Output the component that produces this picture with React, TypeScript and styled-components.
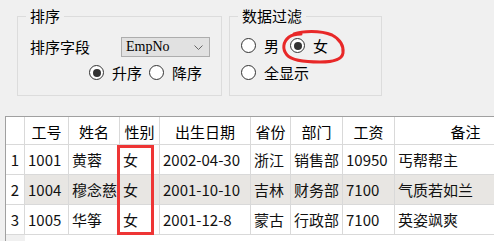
import React from "react";
import styled, { createGlobalStyle } from "styled-components";

const GlobalStyle = createGlobalStyle`
  html, body {
    margin: 0;
    padding: 0;
    overflow: hidden;
    background: #f0f0f0;
  }
  body {
    font-family: "Noto Sans CJK SC", "Noto Sans", sans-serif;
    font-size: 15px;
    line-height: 20px;
    color: #000;
  }
`;

const Page = styled.div`
  width: 100vw;
  height: 100vh;
  display: flex;
  flex-direction: column;
`;

const TopArea = styled.div`
  position: relative;
  display: flex;
  gap: 7px;
  height: 116px;
  box-sizing: border-box;
  padding: 6px 0 0 17px;
  flex-shrink: 0;
`;

const GroupBox = styled.fieldset<{ $w: number }>`
  width: ${(p) => p.$w}px;
  height: 90px;
  box-sizing: border-box;
  margin: 0;
  padding: 0 0 0 8px;
  border: 1px solid #dcdcdc;
  min-width: 0;
`;

const Legend = styled.legend`
  padding: 0 4px;
  font-size: 15px;
  line-height: 20px;
`;

const GroupBody = styled.div<{ $pt: number; $pl: number; $gap: number }>`
  display: flex;
  flex-direction: column;
  gap: ${(p) => p.$gap}px;
  padding: ${(p) => p.$pt}px 0 0 ${(p) => p.$pl}px;
`;

const FieldRow = styled.div`
  display: flex;
  align-items: center;
  height: 20px;
`;

const FieldLabel = styled.span`
  width: 91px;
  flex-shrink: 0;
`;

const Combo = styled.div`
  width: 89px;
  height: 20px;
  box-sizing: border-box;
  background: #e1e1e1;
  border: 1px solid #adadad;
  display: flex;
  align-items: center;
  justify-content: space-between;
  padding: 0 6px 0 4px;
  font-family: "Liberation Serif", "DejaVu Serif", serif;
  font-size: 14px;
`;

const RadioRow = styled.div<{ $indent: number; $gap: number }>`
  display: flex;
  align-items: center;
  height: 21px;
  padding-left: ${(p) => p.$indent}px;
  gap: ${(p) => p.$gap}px;
`;

const RadioItem = styled.label`
  display: flex;
  align-items: center;
  gap: 8px;
  white-space: nowrap;
`;

const RadioCircle = styled.span<{ $checked?: boolean }>`
  position: relative;
  width: 15px;
  height: 15px;
  box-sizing: border-box;
  border-radius: 50%;
  border: 1px solid #333;
  background: #fff;
  flex-shrink: 0;
  &::after {
    content: "";
    display: ${(p) => (p.$checked ? "block" : "none")};
    position: absolute;
    left: 2.5px;
    top: 2.5px;
    width: 8px;
    height: 8px;
    border-radius: 50%;
    background: #333;
  }
`;

const Scribble = styled.svg`
  position: absolute;
  left: 280px;
  top: 28px;
  width: 66px;
  height: 38px;
  overflow: visible;
`;

const TableWrap = styled.div`
  position: relative;
  flex: 1;
  margin-left: 5px;
  border-left: 1px solid #a0a0a0;
  border-top: 1px solid #a0a0a0;
  overflow: hidden;
  background: linear-gradient(to right, #f0f0f0 19px, #fff 19px);
`;

const Grid = styled.div`
  display: grid;
  grid-template-columns: 19px 44px 51px 40px 91px 40px 52px 52px 142px;
  grid-template-rows: 28px repeat(3, 30px);
  width: max-content;
`;

const Cell = styled.div<{ $center?: boolean; $alt?: boolean; $head?: boolean }>`
  box-sizing: border-box;
  border-right: 1px solid #d9d9d9;
  border-bottom: 1px solid #d9d9d9;
  background: ${(p) => (p.$alt ? "#e8e6e3" : "#fff")};
  display: flex;
  align-items: center;
  justify-content: ${(p) => (p.$center ? "center" : "flex-start")};
  padding: ${(p) => (p.$head ? "2px 0 0" : "1px 3px 0")};
  white-space: nowrap;
  overflow: hidden;
  color: ${(p) => (p.$head ? "#000" : "#111")};
`;

const Highlight = styled.div`
  position: absolute;
  left: 111px;
  top: 28px;
  width: 37px;
  height: 90px;
  box-sizing: border-box;
  border: 3px solid #ee3535;
  pointer-events: none;
`;

const headers = ["工号", "姓名", "性别", "出生日期", "省份", "部门", "工资", "备注"];
const rows = [
  ["1001", "黄蓉", "女", "2002-04-30", "浙江", "销售部", "10950", "丐帮帮主"],
  ["1004", "穆念慈", "女", "2001-10-10", "吉林", "财务部", "7100", "气质若如兰"],
  ["1005", "华筝", "女", "2001-12-8", "蒙古", "行政部", "7100", "英姿飒爽"],
];

function Radio({ label, checked }: { label: string; checked?: boolean }) {
  return (
    <RadioItem>
      <RadioCircle $checked={checked} />
      <span>{label}</span>
    </RadioItem>
  );
}

export default function App() {
  return (
    <>
      <GlobalStyle />
      <Page>
        <TopArea>
          <GroupBox $w={205}>
            <Legend>排序</Legend>
            <GroupBody $pt={11} $pl={4} $gap={5}>
              <FieldRow>
                <FieldLabel>排序字段</FieldLabel>
                <Combo>
                  <span>EmpNo</span>
                  <svg width="9" height="5" viewBox="0 0 9 5">
                    <polyline points="0.5,0.5 4.5,4.5 8.5,0.5" fill="none" stroke="#666" strokeWidth="1" />
                  </svg>
                </Combo>
              </FieldRow>
              <RadioRow $indent={59} $gap={7}>
                <Radio label="升序" checked />
                <Radio label="降序" />
              </RadioRow>
            </GroupBody>
          </GroupBox>
          <GroupBox $w={153}>
            <Legend>数据过滤</Legend>
            <GroupBody $pt={9} $pl={3} $gap={6}>
              <RadioRow $indent={0} $gap={11}>
                <Radio label="男" />
                <Radio label="女" checked />
              </RadioRow>
              <RadioRow $indent={0} $gap={11}>
                <Radio label="全显示" />
              </RadioRow>
            </GroupBody>
          </GroupBox>
          <Scribble viewBox="0 0 66 38">
            <path
              d="M 14 6 C 22 3, 40 2, 52 7 C 60 11, 64 18, 63 25 C 62 32, 52 34, 40 34 C 26 34, 12 33, 7 27 C 2 21, 3 14, 9 9 C 12 7, 16 6, 21 6"
              fill="none"
              stroke="#e82828"
              strokeWidth="3"
              strokeLinecap="round"
              strokeLinejoin="round"
            />
          </Scribble>
        </TopArea>
        <TableWrap>
          <Grid>
            <Cell $head />
            {headers.map((h) => (
              <Cell key={h} $head $center>
                {h}
              </Cell>
            ))}
            {rows.map((r, i) => (
              <React.Fragment key={r[0]}>
                <Cell $center>{i + 1}</Cell>
                {r.map((v, j) => (
                  <Cell key={j} $alt={i === 1}>
                    {v}
                  </Cell>
                ))}
              </React.Fragment>
            ))}
          </Grid>
          <Highlight />
        </TableWrap>
      </Page>
    </>
  );
}
